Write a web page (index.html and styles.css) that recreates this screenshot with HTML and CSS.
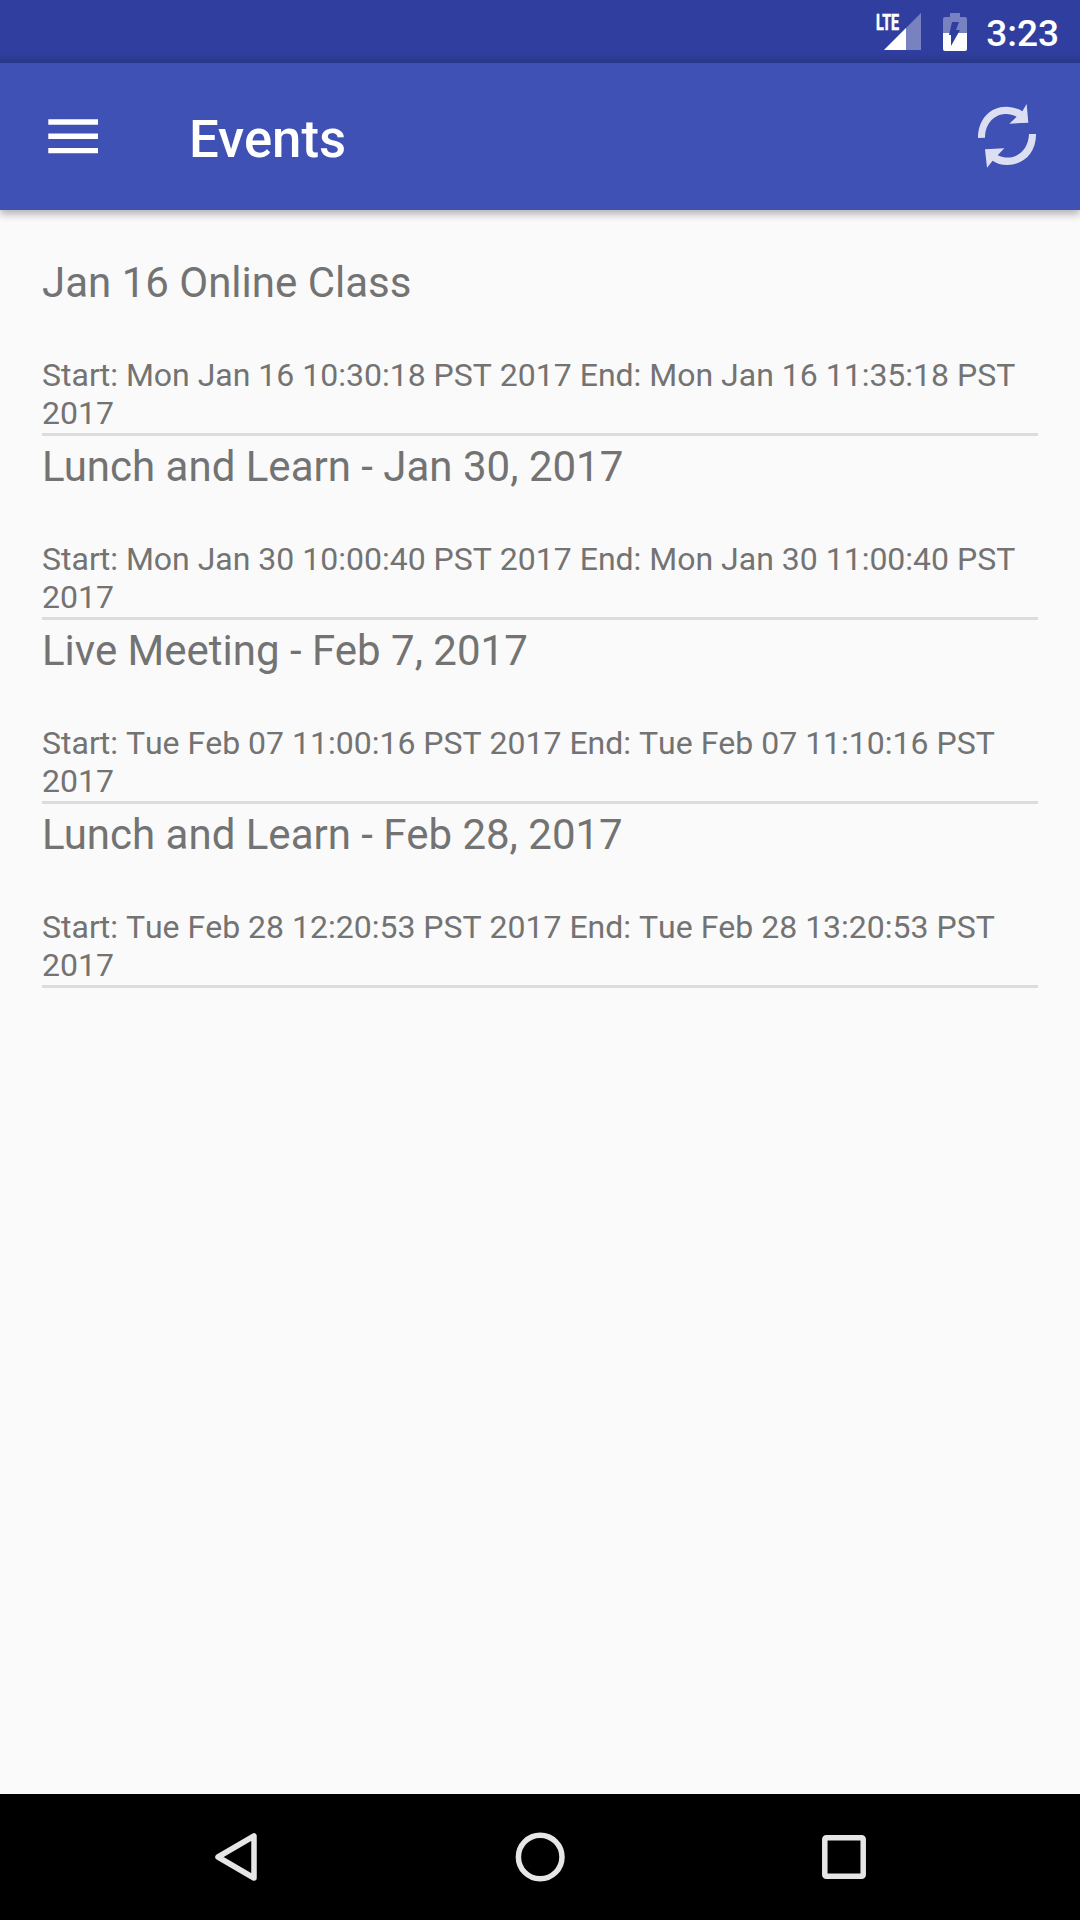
FILE: index.html
```html
<!DOCTYPE html>
<html lang="en">
<head>
  <meta charset="UTF-8" />
  <meta name="viewport" content="width=device-width, initial-scale=1.0" />
  <title>Events</title>
  <link rel="stylesheet" href="styles.css">
</head>
<body>

  <!-- Status bar -->
  <div class="status-bar">
    <svg class="signal" width="48" height="40" viewBox="0 0 48 40">
      <path d="M46 1V38H9z" fill="#fff" fill-opacity=".35" />
      <path d="M31 16V38H9z" fill="#fff" />
      <rect x="0" y="0" width="25" height="19" fill="#303f9f" />
      <text class="lte" x="1" y="17.5" textLength="23" lengthAdjust="spacingAndGlyphs">LTE</text>
    </svg>
    <svg class="battery" width="24" height="38" viewBox="0 0 24 38">
      <path d="M7 0H17V4H22Q24 4 24 6V20H0V6Q0 4 2 4H7z" fill="#fff" fill-opacity=".35" />
      <path d="M0 20H24V36Q24 38 22 38H2Q0 38 0 36z" fill="#fff" />
      <path d="M9 9H16L13 17H17L8 33V22H6z" fill="#303f9f" />
    </svg>
    <span class="clock">3:23</span>
  </div>

  <header class="toolbar">
    <svg class="menu-icon" width="50" height="35" viewBox="0 0 50 35">
      <path d="M0.3 3H50M0.3 17.3H50M0.3 31.6H50" stroke="#fff" stroke-width="5.4" />
    </svg>
    <h1>Events</h1>
    <svg class="refresh-icon" width="100" height="93" viewBox="0 0 300 279">
      <g fill="#dcdff2">
        <path d="M54 144C54 86 92 50 138 50C157 50 174 56 187 64L200 42L205 98L148 101L170 80C128 58 76 82 75 143z" />
        <path d="M228 132C229 188 190 225 142 225C124 225 109 220 98 212L81 233L75 178L133 175L113 196C158 217 205 188 207 132z" />
      </g>
    </svg>
  </header>

  <main>
    <ul class="events">
      <li>
        <h2>Jan 16 Online Class</h2>
        <p>Start: Mon Jan 16 10:30:18 PST 2017 End: Mon Jan 16 11:35:18 PST 2017</p>
      </li>
      <li>
        <h2>Lunch and Learn - Jan 30, 2017</h2>
        <p>Start: Mon Jan 30 10:00:40 PST 2017 End: Mon Jan 30 11:00:40 PST 2017</p>
      </li>
      <li>
        <h2>Live Meeting - Feb 7, 2017</h2>
        <p>Start: Tue Feb 07 11:00:16 PST 2017 End: Tue Feb 07 11:10:16 PST 2017</p>
      </li>
      <li>
        <h2>Lunch and Learn - Feb 28, 2017</h2>
        <p>Start: Tue Feb 28 12:20:53 PST 2017 End: Tue Feb 28 13:20:53 PST 2017</p>
      </li>
    </ul>
  </main>

  <!-- Back, home, recents -->
  <nav class="nav-bar">
    <svg width="60" height="60" viewBox="0 0 60 60">
      <path d="M12 30L48 9V51z" />
    </svg>
    <svg width="60" height="60" viewBox="0 0 60 60">
      <circle cx="30.2" cy="30" r="21.8" />
    </svg>
    <svg width="60" height="60" viewBox="0 0 60 60">
      <rect x="10.8" y="10.8" width="38.4" height="38.4" rx="1.5" />
    </svg>
  </nav>

</body>
</html>
```

FILE: styles.css
```css
body {
  margin: 0;
  height: 1920px;
  display: flex;
  flex-direction: column;
  overflow: hidden;
  font-family: Roboto, sans-serif;
  background: #fafafa;
}

h1, h2, p {
  margin: 0;
}

.status-bar {
  height: 63px;
  box-sizing: border-box;
  padding-right: 21px;
  display: flex;
  align-items: center;
  justify-content: flex-end;
  background: linear-gradient(#303f9f 52px, #29378a);
  color: white;
}

.signal {
  margin-right: 20px;
  overflow: visible;
}

.battery {
  margin-right: 19px;
}

.lte {
  font-size: 21.5px;
  font-weight: bold;
  fill: white;
  stroke: white;
  stroke-width: 0.6;
}

.clock {
  font-size: 37px;
  font-weight: 500;
  line-height: 40px;
  padding-top: 4px;
}

.toolbar {
  height: 147px;
  box-sizing: border-box;
  padding: 0 20px 0 48px;
  display: flex;
  align-items: center;
  background: #3f51b5;
  color: white;
  box-shadow: 0 4px 8px rgba(0,0,0,0.3);
  clip-path: inset(0 0 -20px 0);
}

.menu-icon {
  margin-bottom: 1px;
}

.toolbar h1 {
  flex: 1;
  margin-left: 91px;
  padding-top: 4px;
  font-size: 52.7px;
  font-weight: 500;
}

main {
  flex: 1;
  padding: 42px 42px 0;
}

.events {
  list-style: none;
  margin: 0;
  padding: 0;
}

.events li {
  height: 184px;
  box-sizing: border-box;
  padding-top: 5px;
  border-bottom: 3px solid #dcdcdc;
  color: #737373;
}

.events h2 {
  font-size: 42px;
  font-weight: normal;
  line-height: 52px;
}

.events p {
  margin-top: 47px;
  font-size: 32px;
  line-height: 38px;
  font-kerning: none;
}

.nav-bar {
  height: 126px;
  box-sizing: border-box;
  padding: 0 84px;
  display: grid;
  grid-template-columns: repeat(3, 1fr);
  align-items: center;
  justify-items: center;
  background: black;
}

.nav-bar svg {
  fill: none;
  stroke: #e6e6e6;
  stroke-width: 5.5;
  stroke-linejoin: round;
}
```
